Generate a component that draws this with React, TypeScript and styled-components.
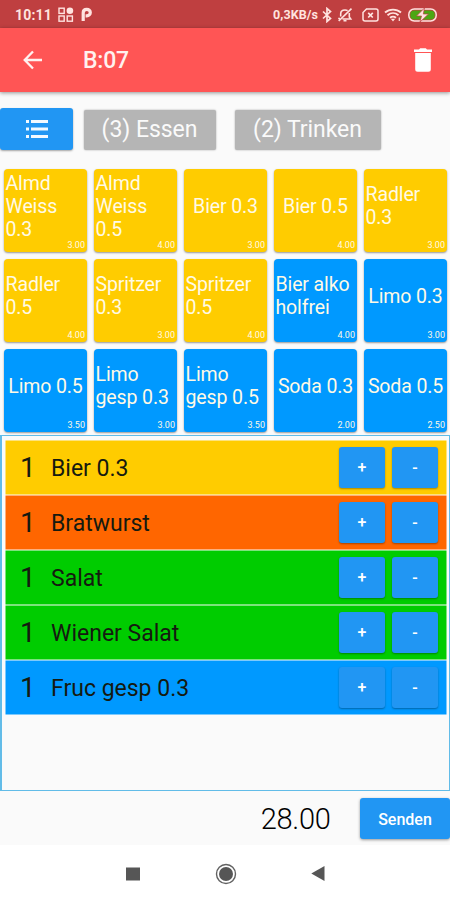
import React from "react";
import styled, { createGlobalStyle } from "styled-components";

const GlobalStyle = createGlobalStyle`
  *, *::before, *::after { box-sizing: border-box; }
  body { margin: 0; background: #fafafa; font-family: Roboto, "Liberation Sans", sans-serif; }
  button { font-family: inherit; border: 0; margin: 0; padding: 0; color: #fff; }
`;

const Screen = styled.div`
  width: 450px;
  height: 900px;
  display: flex;
  flex-direction: column;
  overflow: hidden;
  background: #fafafa;
`;

const StatusBar = styled.div`
  height: 28px;
  flex: none;
  display: flex;
  align-items: center;
  justify-content: space-between;
  padding: 1px 13px 0 15px;
  background: #bf3f40;
  color: #ffe3df;
`;

const StatusGroup = styled.div`
  display: flex;
  align-items: center;
  svg { display: block; flex: none; }
`;

const ParkingSlot = styled.span`
  margin-left: 7px;
`;

const IndicatorGroup = styled(StatusGroup)`
  svg:nth-of-type(2) { margin-left: 5px; }
  svg:nth-of-type(3) { margin-left: 9px; }
  svg:nth-of-type(4) { margin-left: 5px; }
  svg:nth-of-type(5) { margin-left: 6px; }
`;

const Clock = styled.span`
  width: 43px;
  font-size: 14px;
  font-weight: 700;
  letter-spacing: 0.2px;
`;

const NetSpeed = styled.span`
  width: 49px;
  font-size: 12.5px;
  font-weight: 700;
  letter-spacing: 0.1px;
  white-space: nowrap;
`;

const AppBar = styled.header`
  height: 64px;
  flex: none;
  display: flex;
  align-items: center;
  padding: 0 17px 0 23px;
  background: #ff5555;
  color: #fff;
  box-shadow: 0 1px 4px rgba(0, 0, 0, 0.42);
  svg { display: block; }
`;

const Title = styled.h1`
  flex: 1;
  margin: 2px 0 0 40px;
  font-size: 23px;
  line-height: 28px;
  font-weight: 500;
  letter-spacing: -0.2px;
  color: #fff1ef;
`;

const IconButton = styled.button`
  background: none;
`;

const Categories = styled.nav`
  height: 77px;
  flex: none;
  display: flex;
  align-items: flex-start;
  padding-top: 16px;
`;

const ListButton = styled.button`
  width: 73px;
  height: 42px;
  display: grid;
  place-items: center;
  border-radius: 3px;
  background: #2196f3;
  box-shadow: 0 1px 2px rgba(0, 0, 0, 0.35);
`;

const Category = styled.button<{ $width: number; $gap: number }>`
  width: ${(p) => p.$width}px;
  height: 40px;
  margin: 2px 0 0 ${(p) => p.$gap}px;
  border-radius: 2px;
  background: #b5b5b5;
  color: #fafafa;
  font-size: 23px;
  line-height: 40px;
  letter-spacing: -0.05px;
  box-shadow: 0 0 2px rgba(0, 0, 0, 0.35);
`;

const ProductGrid = styled.div`
  flex: none;
  height: 266px;
  display: grid;
  grid-template-columns: repeat(5, 83px);
  grid-auto-rows: 83px;
  gap: 7px;
  padding-left: 4px;
`;

const Tile = styled.button<{ $color: string }>`
  display: grid;
  grid-template-rows: 1fr;
  border-radius: 4px;
  background: ${(p) => p.$color};
  box-shadow: 0 1px 2px rgba(0, 0, 0, 0.4);
  color: #fffae6;
`;

const TileName = styled.span<{ $centered: boolean }>`
  grid-area: 1 / 1;
  align-self: center;
  padding: 0 0 9px ${(p) => (p.$centered ? 0 : 1.5)}px;
  text-align: ${(p) => (p.$centered ? "center" : "left")};
  font-size: 19.5px;
  line-height: 23px;
  letter-spacing: -0.12px;
  white-space: pre;
`;

const TilePrice = styled.span`
  grid-area: 1 / 1;
  place-self: end;
  padding: 0 2px 2px 0;
  font-size: 9px;
  line-height: 10px;
`;

const OrderList = styled.section`
  flex: none;
  height: 356px;
  border: solid #62bce8;
  border-width: 1px 1px 1px 2px;
  padding: 5px 3px 0 3.5px;
  display: flex;
  flex-direction: column;
  gap: 2px;
`;

const OrderRow = styled.div<{ $color: string }>`
  flex: none;
  height: 53px;
  display: flex;
  align-items: center;
  padding-right: 8px;
  background: ${(p) => p.$color};
  color: #151a10;
  box-shadow: 0 0 0 0.5px ${(p) => p.$color};
`;

const Quantity = styled.span`
  width: 45.5px;
  padding-left: 14.5px;
  font-size: 28px;
  line-height: 32px;
`;

const OrderName = styled.span`
  flex: 1;
  padding-top: 3px;
  font-size: 23px;
  line-height: 28px;
  white-space: nowrap;
`;

const StepButton = styled.button`
  width: 46px;
  height: 41px;
  margin-left: 7px;
  border-radius: 3px;
  background: #2196f3;
  box-shadow: 0 1px 2px rgba(0, 0, 0, 0.35);
  font-size: 16px;
  font-weight: 500;
`;

const Footer = styled.footer`
  flex: none;
  height: 54px;
  display: flex;
  justify-content: flex-end;
  align-items: flex-start;
  padding-top: 7px;
`;

const Total = styled.output`
  margin: 1px 29.5px 0 0;
  font-size: 29px;
  line-height: 41px;
  letter-spacing: -0.3px;
  font-weight: 300;
  color: #000;
`;

const SendButton = styled.button`
  width: 90px;
  height: 41px;
  padding-top: 1px;
  border-radius: 3px;
  background: #2196f3;
  box-shadow: 0 1px 3px rgba(0, 0, 0, 0.4);
  font-size: 16px;
  font-weight: 500;
`;

const SystemNav = styled.div`
  flex: 1;
  background: #fff;
  display: grid;
  grid-template-columns: 94px 93px 91px;
  justify-content: center;
  align-items: center;
  justify-items: center;
  padding: 2px 1px 0 0;
  svg { display: block; }
`;

const YELLOW = "#ffcc00";
const BLUE = "#0099ff";

const products = [
  { name: "Almd\nWeiss\n0.3", price: "3.00", color: YELLOW },
  { name: "Almd\nWeiss\n0.5", price: "4.00", color: YELLOW },
  { name: "Bier 0.3", price: "3.00", color: YELLOW },
  { name: "Bier 0.5", price: "4.00", color: YELLOW },
  { name: "Radler\n0.3", price: "3.00", color: YELLOW },
  { name: "Radler\n0.5", price: "4.00", color: YELLOW },
  { name: "Spritzer\n0.3", price: "3.00", color: YELLOW },
  { name: "Spritzer\n0.5", price: "4.00", color: YELLOW },
  { name: "Bier alko\nholfrei", price: "4.00", color: BLUE },
  { name: "Limo 0.3", price: "3.00", color: BLUE },
  { name: "Limo 0.5", price: "3.50", color: BLUE },
  { name: "Limo\ngesp 0.3", price: "3.00", color: BLUE },
  { name: "Limo\ngesp 0.5", price: "3.50", color: BLUE },
  { name: "Soda 0.3", price: "2.00", color: BLUE },
  { name: "Soda 0.5", price: "2.50", color: BLUE },
];

const order = [
  { name: "Bier 0.3", color: YELLOW },
  { name: "Bratwurst", color: "#ff6600" },
  { name: "Salat", color: "#00cc00" },
  { name: "Wiener Salat", color: "#00cc00" },
  { name: "Fruc gesp 0.3", color: BLUE },
];

const AppsIcon = () => (
  <svg width="16" height="16" viewBox="0 0 16 16" fill="none" stroke="currentColor" strokeWidth="1.4">
    <rect x="1" y="1.2" width="5.2" height="5.2" />
    <rect x="1" y="9" width="5.2" height="5.2" />
    <rect x="9.2" y="9" width="5.2" height="5.2" />
    <circle cx="11.9" cy="3.8" r="3.3" fill="currentColor" stroke="none" />
  </svg>
);

const ParkingIcon = () => (
  <svg width="12" height="15" viewBox="0 0 12 15" fill="none" stroke="currentColor" strokeWidth="3.2">
    <path d="M2.2 14V5.8C2.200 3.600 3.800 2.400 5.800 2.400s3.500 1.300 3.500 3.200S7.800 8.800 5.800 8.800H4.600" />
  </svg>
);

const BluetoothIcon = () => (
  <svg width="10" height="16" viewBox="0 0 10 16" fill="none" stroke="currentColor" strokeWidth="1.7">
    <path d="M1 4.500 8.500 11.500 5 14.500V1.500l3.500 3L1 11.500" />
  </svg>
);

const MutedIcon = () => (
  <svg width="16" height="16" viewBox="0 0 16 16" fill="none" stroke="currentColor" strokeWidth="1.600">
    <path d="M3.700 9.500V6.800C3.700 4.500 5.500 3 8 3c1 0 1.900.2 2.600.7M12.300 6v4l1.400 2H5.500M6.500 13.700h3M14.500 1.700 1.700 14M1.200 11.500H3" />
  </svg>
);

const NoSimIcon = () => (
  <svg width="17" height="14" viewBox="0 0 17 14" fill="none" stroke="currentColor" strokeWidth="1.500">
    <path d="M4.500 1H14a2 2 0 0 1 2 2v8a2 2 0 0 1-2 2H3a2 2 0 0 1-2-2V4.500Z" />
    <path d="m6.200 4.900 4.600 4.600m0-4.600-4.600 4.600" strokeWidth="1.700" />
  </svg>
);

const WifiIcon = () => (
  <svg width="18" height="14" viewBox="0 0 18 14" fill="none" stroke="currentColor" strokeWidth="1.900">
    <path d="M1 4.500C5.500.6 12.500.6 17 4.500M3.500 7.200c3.300-2.800 7.700-2.800 11 0M6 9.800c1.900-1.500 4.100-1.500 6 0" />
    <path d="m6.800 10.800 2.200 2.700 2.200-2.700Z" fill="currentColor" stroke="none" />
    <path d="M15.300 9.500v3.500" strokeWidth="1.200" />
  </svg>
);

const BatteryIcon = () => (
  <svg width="29" height="14" viewBox="0 0 29 14">
    <rect x="0.800" y="1" width="27.400" height="12" rx="5.500" fill="#bf3f40" stroke="currentColor" strokeWidth="1.500" />
    <rect x="2.300" y="2.500" width="24.400" height="9" rx="4" fill="#4ba713" />
    <path d="M16.500 0 8.500 8h5L12 14l8.500-8h-5.200Z" fill="currentColor" stroke="#bf3f40" strokeWidth="0.700" />
  </svg>
);

const BackIcon = () => (
  <svg width="20" height="20" viewBox="0 0 20 20" fill="none" stroke="#fff1ef" strokeWidth="2.300">
    <path d="M19 10H2M10 1.500 1.700 10l8.300 8.500" />
  </svg>
);

const TrashIcon = () => (
  <svg width="20" height="24" viewBox="0 0 20 24" fill="#fff">
    <path d="M1 1.500h5L7.200.3h5.600L14 1.500h5V4H1ZM2.200 5h15.600v16.200a2.500 2.500 0 0 1-2.500 2.500H4.700a2.500 2.500 0 0 1-2.500-2.500Z" />
  </svg>
);

const ListIcon = () => (
  <svg width="22" height="18" viewBox="0 0 22 18" fill="#f2f9ff">
    <path d="M0 0h3v3H0zM5 0h17v3H5zM0 7.500h3v3H0zM5 7.500h17v3H5zM0 15h3v3H0zM5 15h17v3H5z" />
  </svg>
);

const RecentsIcon = () => (
  <svg width="14" height="14" viewBox="0 0 14 14">
    <rect y="0.500" width="14" height="13" fill="#565656" />
  </svg>
);

const HomeIcon = () => (
  <svg width="22" height="22" viewBox="0 0 22 22">
    <circle cx="11" cy="11" r="9.500" fill="none" stroke="#626262" strokeWidth="1.400" />
    <circle cx="11" cy="11" r="7" fill="#565656" />
  </svg>
);

const NavBackIcon = () => (
  <svg width="14" height="15" viewBox="0 0 14 15">
    <path d="M0.300 7.500 13.500 0v15Z" fill="#565656" />
  </svg>
);

export default function App() {
  return (
    <>
      <GlobalStyle />
      <Screen>
        <StatusBar>
          <StatusGroup>
            <Clock>10:11</Clock>
            <AppsIcon />
            <ParkingSlot><ParkingIcon /></ParkingSlot>
          </StatusGroup>
          <IndicatorGroup>
            <NetSpeed>0,3KB/s</NetSpeed>
            <BluetoothIcon />
            <MutedIcon />
            <NoSimIcon />
            <WifiIcon />
            <BatteryIcon />
          </IndicatorGroup>
        </StatusBar>
        <AppBar>
          <IconButton aria-label="Zurück"><BackIcon /></IconButton>
          <Title>B:07</Title>
          <IconButton aria-label="Löschen"><TrashIcon /></IconButton>
        </AppBar>
        <Categories>
          <ListButton aria-label="Liste"><ListIcon /></ListButton>
          <Category $width={132} $gap={10.5}>(3) Essen</Category>
          <Category $width={146} $gap={19}>(2) Trinken</Category>
        </Categories>
        <ProductGrid>
          {products.map((p) => (
            <Tile key={p.name} $color={p.color}>
              <TileName $centered={!p.name.includes("\n")}>{p.name}</TileName>
              <TilePrice>{p.price}</TilePrice>
            </Tile>
          ))}
        </ProductGrid>
        <OrderList>
          {order.map((item) => (
            <OrderRow key={item.name} $color={item.color}>
              <Quantity>1</Quantity>
              <OrderName>{item.name}</OrderName>
              <StepButton>+</StepButton>
              <StepButton>-</StepButton>
            </OrderRow>
          ))}
        </OrderList>
        <Footer>
          <Total>28.00</Total>
          <SendButton>Senden</SendButton>
        </Footer>
        <SystemNav>
          <RecentsIcon />
          <HomeIcon />
          <NavBackIcon />
        </SystemNav>
      </Screen>
    </>
  );
}
